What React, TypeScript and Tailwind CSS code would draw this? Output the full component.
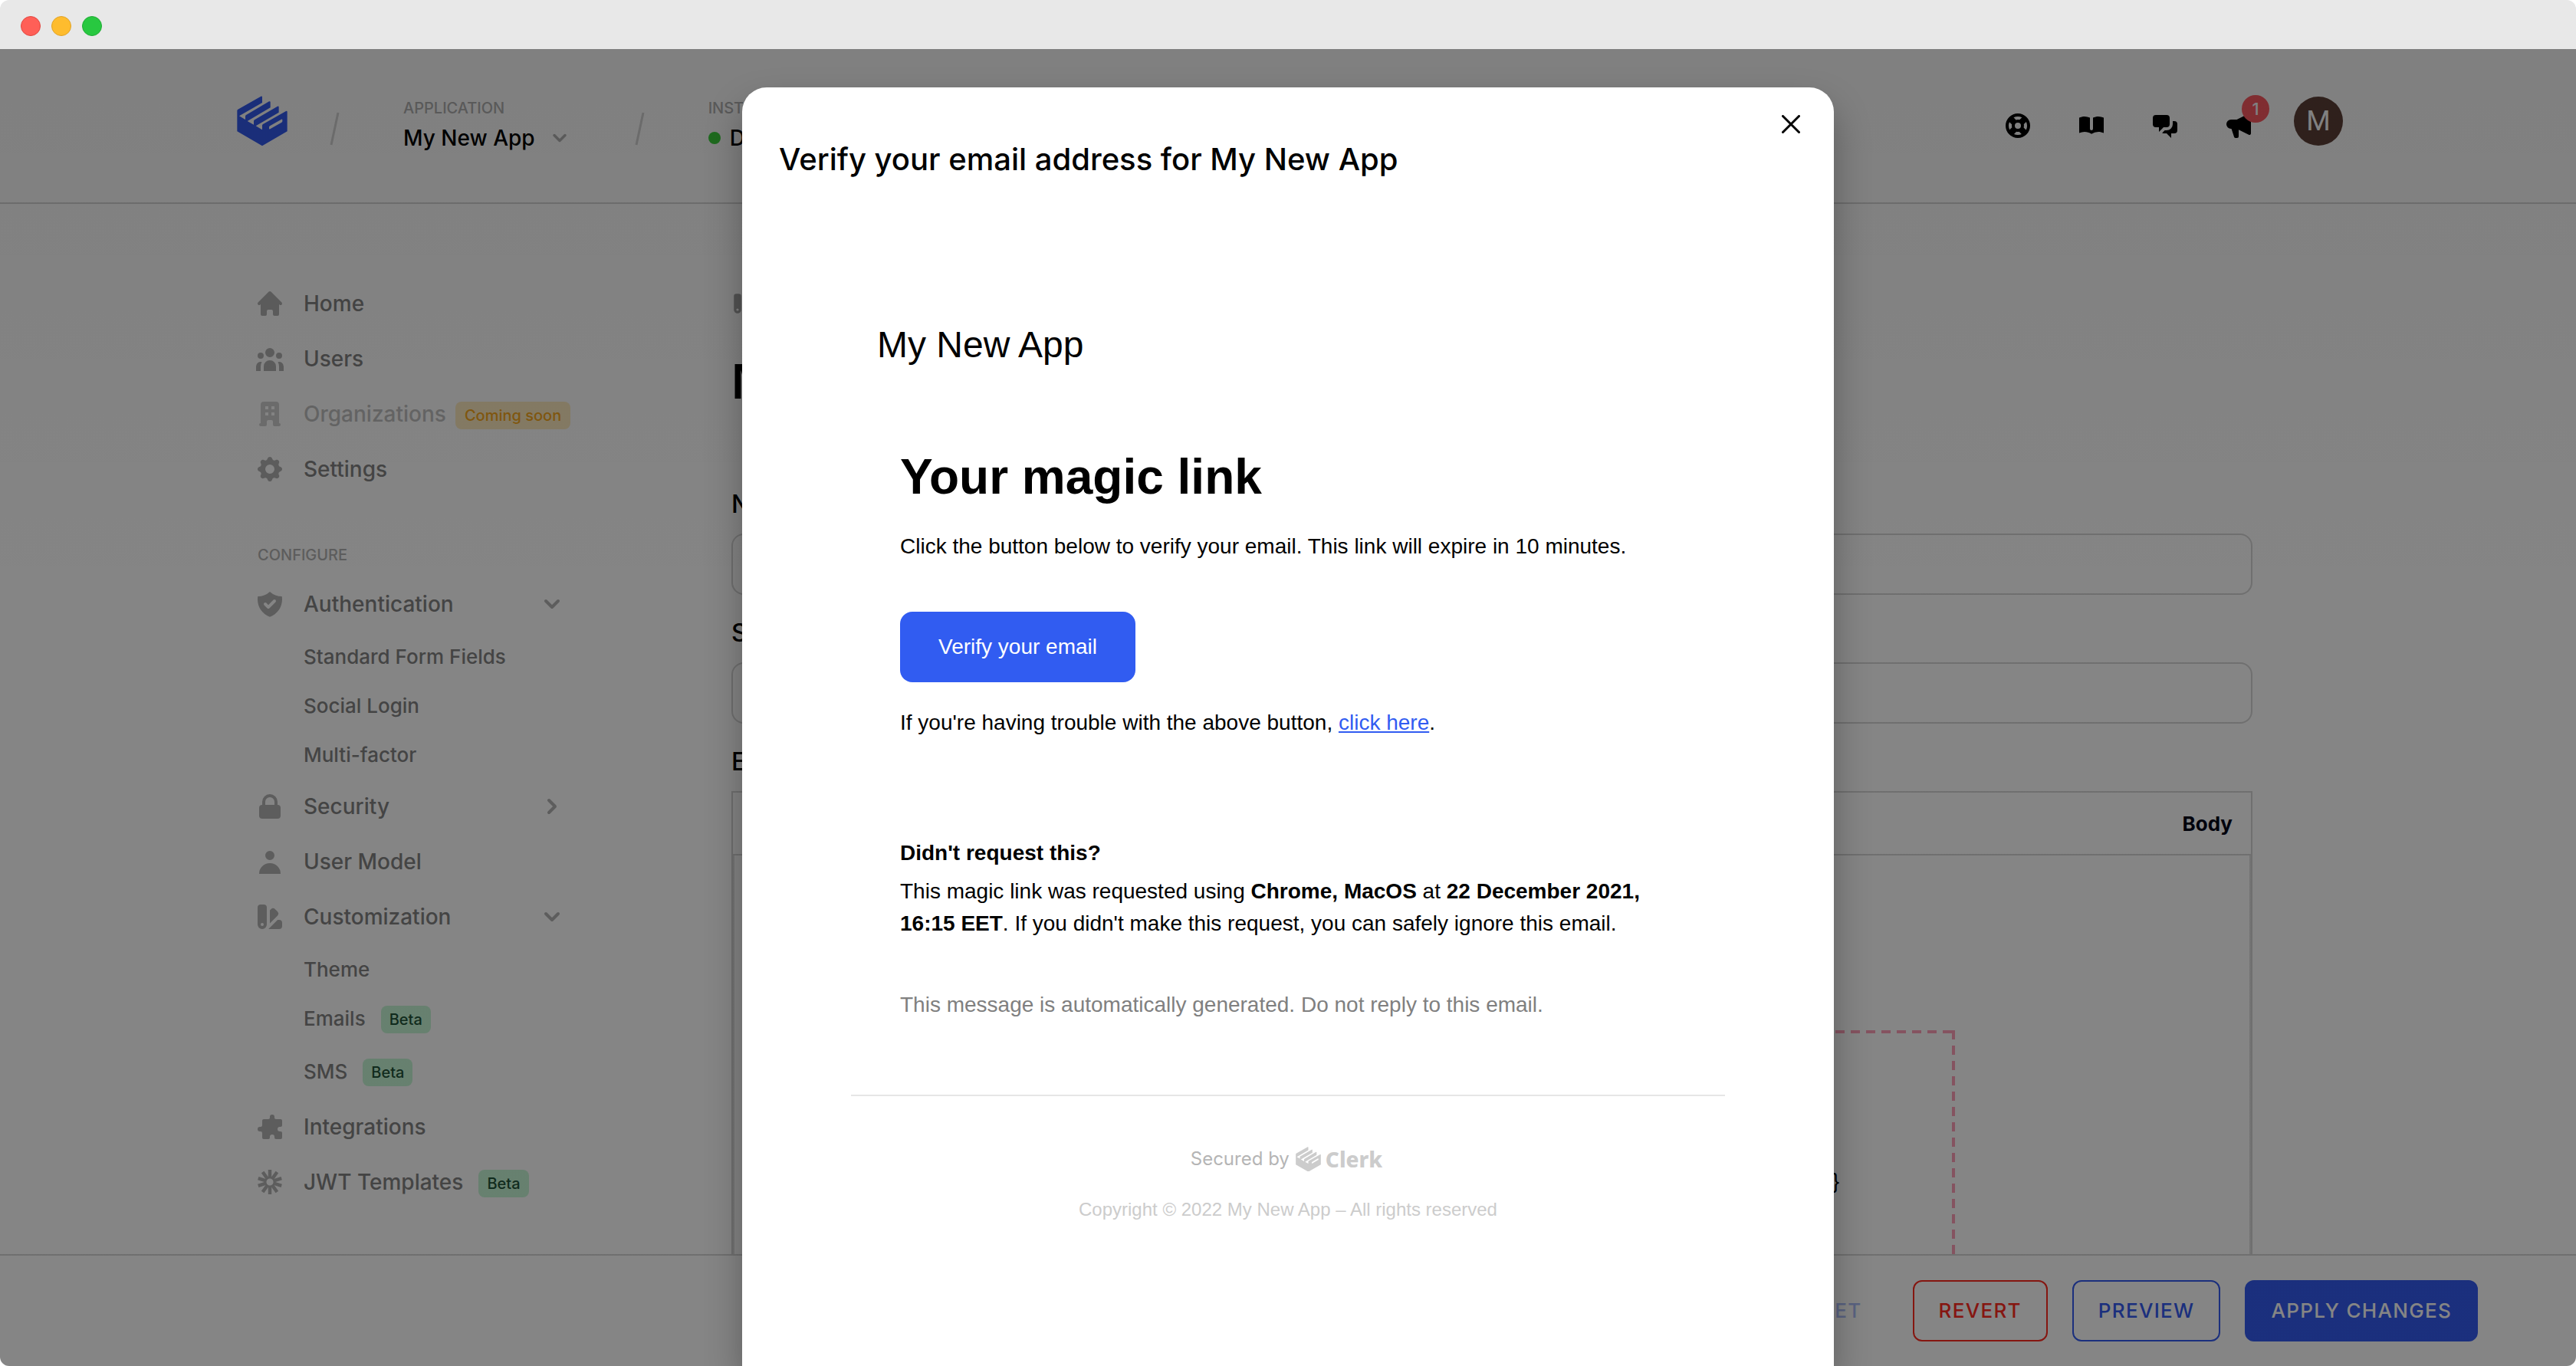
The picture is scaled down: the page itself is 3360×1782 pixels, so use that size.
import type { ReactNode } from "react";
import {
  HiSupport,
  HiBookOpen,
  HiChatAlt2,
  HiSpeakerphone,
  HiHome,
  HiUserGroup,
  HiOfficeBuilding,
  HiCog,
  HiShieldCheck,
  HiLockClosed,
  HiUser,
  HiColorSwatch,
  HiPuzzle,
} from "react-icons/hi";

const INTER = "font-['Inter',sans-serif]";
const HELVETICA = "font-['Liberation_Sans',Arial,sans-serif]";

function ClerkMark({ className }: { className: string }) {
  return (
    <svg viewBox="57 76 198 197" className={className} fill="currentColor" aria-hidden="true">
      <path
        fillRule="evenodd"
        d="M58 134Q58 131 61 129L151 78Q156 76 156 81V103L66 155L90 169V156Q90 153 93 151L183 98Q188 96 188 101V122L98 175L123 189.500V175Q123 172 126 170L216 117Q221 115 221 120V141L131 194L156 208.500V192Q156 189 159 187L249 136Q254 134 254 139V215L156 272L58 215ZM183 199Q183 196 186 194L231 168Q235 167 235 170V176Q235 179 232 180L187 206Q183 207 183 204Z"
      />
    </svg>
  );
}

function Chevron({ right = false, className }: { right?: boolean; className: string }) {
  return (
    <svg viewBox="0 0 32 32" className={className} fill="none" stroke="currentColor" strokeWidth="4" strokeLinecap="round" strokeLinejoin="round" aria-hidden="true">
      <path d={right ? "M12 8L20 16L12 24" : "M8 12L16 20L24 12"} />
    </svg>
  );
}

function Slash() {
  return (
    <svg viewBox="0 0 14 52" className="mt-2 h-[52px] w-3.5 text-[#d4d4d4]" stroke="currentColor" strokeWidth="3" aria-hidden="true">
      <path d="M12 5L3 47" />
    </svg>
  );
}

function JwtIcon() {
  const spokes = Array.from({ length: 10 }, (_, i) => i * 36);
  return (
    <svg viewBox="-20 -20 40 40" className="size-10" fill="currentColor" aria-hidden="true">
      {spokes.map((angle) => (
        <rect key={angle} x="-2.200" y="-16" width="4.400" height="11.500" transform={`rotate(${angle})`} />
      ))}
    </svg>
  );
}

function Beta() {
  return (
    <span className="mt-1 ml-5 flex h-9 items-center rounded-lg bg-[#c6f7d6] px-[11px] text-[20px] font-medium text-[#1f5238]">
      Beta
    </span>
  );
}

function NavItem({ icon, label, badge, chevron, muted = false }: { icon: ReactNode; label: string; badge?: ReactNode; chevron?: "down" | "right"; muted?: boolean }) {
  return (
    <li>
      <a href="#" className="flex h-[72px] items-center text-[28px] font-medium text-[#838383]">
        <span className={`mr-6 text-[40px] text-[#b2b2b2] ${muted ? "opacity-60" : ""}`}>{icon}</span>
        <span className={muted ? "opacity-50" : ""}>{label}</span>
        {badge}
        {chevron && <Chevron right={chevron === "right"} className="ml-auto size-8 text-[#b2b2b2]" />}
      </a>
    </li>
  );
}

function SubItem({ label, badge }: { label: string; badge?: ReactNode }) {
  return (
    <li>
      <a href="#" className="flex h-16 items-center pl-16 text-[26px] font-medium text-[#838383]">
        {label}
        {badge}
      </a>
    </li>
  );
}

function Sidebar() {
  return (
    <nav className="ml-7 w-[404px] shrink-0 pt-[94px]" aria-label="Dashboard">
      <ul>
        <NavItem icon={<HiHome />} label="Home" />
        <NavItem icon={<HiUserGroup />} label="Users" />
        <NavItem
          muted
          icon={<HiOfficeBuilding />}
          label="Organizations"
          badge={
            <span className="mt-1 ml-3 flex h-9 items-center whitespace-nowrap rounded-lg bg-[#ffecc0] px-3 text-[20px] text-[#f8a81c]">
              Coming soon
            </span>
          }
        />
        <NavItem icon={<HiCog />} label="Settings" />
      </ul>
      <h2 className="mt-[62px] mb-3.5 pl-1 text-[20px] leading-7 font-medium text-[#b2b2b2]">CONFIGURE</h2>
      <ul>
        <NavItem icon={<HiShieldCheck />} label="Authentication" chevron="down" />
        <SubItem label="Standard Form Fields" />
        <SubItem label="Social Login" />
        <SubItem label="Multi-factor" />
        <NavItem icon={<HiLockClosed />} label="Security" chevron="right" />
        <NavItem icon={<HiUser />} label="User Model" />
        <NavItem icon={<HiColorSwatch />} label="Customization" chevron="down" />
        <SubItem label="Theme" />
        <SubItem label="Emails" badge={<Beta />} />
        <li className="py-[5px]">
          <a href="#" className="flex h-16 items-center pl-16 text-[26px] font-medium text-[#838383]">
            SMS
            <Beta />
          </a>
        </li>
        <NavItem icon={<HiPuzzle />} label="Integrations" />
        <NavItem icon={<JwtIcon />} label="JWT Templates" badge={<Beta />} />
      </ul>
    </nav>
  );
}

function Header() {
  return (
    <header className="shrink-0 border-b-2 border-[#d6d6d6]">
      <div className="mx-auto flex h-[200px] max-w-[2752px] items-center">
        <ClerkMark className="mb-3 ml-[5px] w-[66px] text-[#335bf1]" />
        <div className="ml-[54px]">
          <Slash />
        </div>
        <div className="ml-[83px]">
          <p className="text-[20px] leading-[30px] font-medium text-[#b2b2b2]">APPLICATION</p>
          <button type="button" className="mt-0.5 flex h-11 items-center text-[28px] font-medium">
            My New App
            <Chevron className="ml-[18px] size-7 text-[#b2b2b2]" />
          </button>
        </div>
        <div className="ml-[83px]">
          <Slash />
        </div>
        <div className="ml-[83px]">
          <p className="text-[20px] leading-[30px] font-medium text-[#b2b2b2]">INSTANCE</p>
          <button type="button" className="mt-0.5 flex h-11 items-center text-[28px] font-medium">
            <span className="mr-3 size-4 rounded-full bg-[#3cd23c]" />
            Dev
          </button>
        </div>
        <div className="ml-auto flex items-center gap-14 text-[40px]">
          <a href="#" aria-label="Support"><HiSupport /></a>
          <a href="#" aria-label="Documentation"><HiBookOpen /></a>
          <a href="#" aria-label="Chat"><HiChatAlt2 /></a>
          <a href="#" aria-label="Announcements" className="relative">
            <HiSpeakerphone />
            <span className="absolute -top-5 left-6 flex size-9 items-center justify-center rounded-full bg-[#ff5a62] text-[22px] font-medium text-white">
              1
            </span>
          </a>
        </div>
        <button type="button" aria-label="Account" className="mb-3 ml-[52px] flex size-16 items-center justify-center rounded-full bg-[#5d4037] font-['Roboto',sans-serif] text-[36px] text-white">
          M
        </button>
      </div>
    </header>
  );
}

function Field({ id, label }: { id: string; label: string }) {
  return (
    <div className="mb-[26px]">
      <label htmlFor={id} className="block text-[32px] leading-[48px] font-medium">{label}</label>
      <input id={id} className="mt-3.5 block h-20 w-full rounded-2xl border-2 border-[#d6d6d6] px-6 text-[28px]" />
    </div>
  );
}

function Editor() {
  return (
    <main className="mr-[118px] ml-[218px] min-w-0 flex-1 pt-[110px]">
      <p className="flex h-10 items-center text-[32px] text-[#a3a3a3]"><HiColorSwatch /></p>
      <h1 className="mt-[38px] text-[62px] leading-[88px] font-semibold">Magic</h1>
      <div className="mt-[92px]">
        <Field id="name" label="Name" />
        <Field id="subject" label="Subject" />
      </div>
      <h2 className="text-[32px] leading-[48px] font-medium">Email</h2>
      <div className="mt-3.5 h-[1000px] border-2 border-[#d6d6d6]">
        <div className="flex h-[82px] items-center justify-end border-b-2 border-[#d6d6d6] pr-6 text-[26px] font-bold text-[#020617]">
          Body
        </div>
        <div className="h-full border-x-2 border-[#dedede] pt-[228px]">
          <div className="mx-auto flex h-full max-w-[1208px]">
            <div className="min-w-0 flex-1">
              <div className="h-1 bg-[repeating-linear-gradient(270deg,#ff9fb8_0_12px,transparent_12px_20px)]" />
              <p className={`mt-[172px] pr-[147px] text-right text-[28px] leading-[42px] ${HELVETICA}`}>{"}}"}</p>
            </div>
            <div className="w-1 bg-[repeating-linear-gradient(180deg,#ff9fb8_0_12px,transparent_12px_20px)]" />
          </div>
        </div>
      </div>
    </main>
  );
}

function ActionBar() {
  const base = "flex h-20 items-center rounded-xl border-2 px-8 pb-0.5 text-[26px] font-medium tracking-wider whitespace-nowrap";
  return (
    <footer className="flex h-[146px] shrink-0 items-center justify-end gap-8 border-t-2 border-[#d6d6d6] pr-32">
      <button type="button" className={`${base} border-transparent text-[#335bf1] opacity-40`}>RESET</button>
      <button type="button" className={`${base} border-[#ff2a1f] text-[#ff2a1f]`}>REVERT</button>
      <button type="button" className={`${base} border-[#335bf1] text-[#335bf1]`}>PREVIEW</button>
      <button type="button" className={`${base} border-[#335bf1] bg-[#335bf1] text-white`}>APPLY CHANGES</button>
    </footer>
  );
}

function EmailPreview() {
  return (
    <div className={`mx-auto mt-[190px] max-w-[1140px] ${HELVETICA}`}>
      <p className="px-[34px] text-[48px] leading-[56px]">My New App</p>
      <div className="px-16 pt-[106px] text-[28px] leading-[42px]">
        <h3 className="text-[64px] leading-[76px] font-bold">Your magic link</h3>
        <p className="mt-8">Click the button below to verify your email. This link will expire in 10 minutes.</p>
        <button type="button" className="mt-16 block h-[92px] rounded-2xl bg-[#315cf1] px-[50px] text-white">Verify your email</button>
        <p className="mt-8">
          If you're having trouble with the above button,{" "}
          <a href="#" className="text-[#315cf1] underline">click here</a>.
        </p>
        <p className="mt-32 font-bold">Didn't request this?</p>
        <p className="mt-2">
          This magic link was requested using <b>Chrome, MacOS</b> at <b>22 December 2021,</b> <b>16:15 EET</b>. If you
          didn't make this request, you can safely ignore this email.
        </p>
        <p className="mt-16 text-[#808080]">This message is automatically generated. Do not reply to this email.</p>
      </div>
      <hr className="mt-24 border-t-2 border-[#e6e6e6]" />
      <div className={`mt-[62px] flex h-10 items-center justify-center pr-1 text-[24px] text-[#b5b5b5] ${INTER}`}>
        Secured by
        <span className="ml-2 flex items-center gap-1.5 text-[#cccccc]">
          <ClerkMark className="w-[33px]" />
          <span className="font-['Noto_Sans',sans-serif] text-[28px] leading-10 font-extrabold">Clerk</span>
        </span>
      </div>
      <p className="mt-7 text-center text-[24px] leading-9 text-[#cccccc]">
        Copyright © 2022 My New App – All rights reserved
      </p>
    </div>
  );
}

function PreviewDialog() {
  return (
    <div className="absolute inset-0 flex justify-center overflow-hidden bg-linear-to-b from-black/50 to-black/48 to-40% pt-[50px]">
      <section role="dialog" aria-modal="true" aria-labelledby="dialog-title" className="relative h-full w-full max-w-[1424px] rounded-t-[32px] bg-white px-12 pt-[70px] shadow-[0_24px_48px_rgba(0,0,0,0.3)]">
        <button type="button" aria-label="Close" className="absolute top-7 right-9 flex size-10 items-center justify-center">
          <svg viewBox="0 0 24 24" className="size-6" stroke="currentColor" strokeWidth="3" strokeLinecap="round" aria-hidden="true">
            <path d="M1.500 1.500L22.500 22.500M22.500 1.500L1.500 22.500" />
          </svg>
        </button>
        <h2 id="dialog-title" className="text-[40px] leading-[48px] font-medium">Verify your email address for My New App</h2>
        <EmailPreview />
      </section>
    </div>
  );
}

export default function App() {
  return (
    <div className={`flex h-screen flex-col overflow-hidden rounded-xl bg-white text-black ${INTER}`}>
      <div className="flex h-16 shrink-0 items-center gap-[14px] bg-[#e8e8e8] pt-1 pl-[27px]">
        <span className="size-[26px] rounded-full border border-[#e2463f] bg-[#ff5f57]" />
        <span className="size-[26px] rounded-full border border-[#e1a325] bg-[#febc2e]" />
        <span className="size-[26px] rounded-full border border-[#1fab34] bg-[#28c840]" />
      </div>
      <div className="relative flex min-h-0 flex-1 flex-col">
        <Header />
        <div className="min-h-0 flex-1 overflow-hidden">
          <div className="mx-auto flex max-w-[2752px]">
            <Sidebar />
            <Editor />
          </div>
        </div>
        <ActionBar />
        <PreviewDialog />
      </div>
    </div>
  );
}
